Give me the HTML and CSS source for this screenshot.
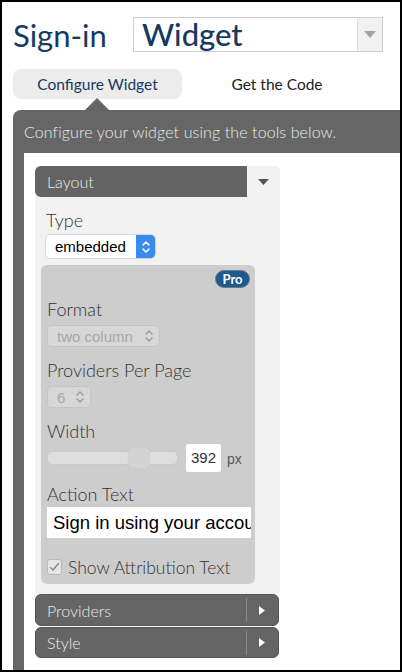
FILE: index.html
```html
<!DOCTYPE html>
<html>
<head>
<meta charset="utf-8">
<link rel="stylesheet" href="styles.css">
</head>
<body>
<div class="frame">
  <div class="top">
    <h1 class="title">Sign-in</h1>
    <div class="big-select">
      <span class="big-select-text">Widget</span>
      <span class="big-select-arrow"><svg width="12" height="7" viewBox="0 0 12 7"><path d="M0 0H12L6 7Z" fill="#a3a3a3"/></svg></span>
    </div>
  </div>
  <div class="tabs">
    <div class="tab active">Configure Widget</div>
    <div class="tab">Get the Code</div>
  </div>
  <div class="panel">
    <div class="panel-head">Configure your widget using the tools below.</div>
    <div class="panel-body">
      <div class="section">
        <div class="section-head">
          <div class="section-title">Layout</div>
          <div class="section-toggle"><svg width="11" height="6" viewBox="0 0 11 6"><path d="M0 0H11L5.5 6Z" fill="#555"/></svg></div>
        </div>
        <div class="section-content">
          <div class="label first">Type</div>
          <div class="select">
            <span class="select-text">embedded</span>
            <span class="stepper"><svg width="10" height="16" viewBox="0 0 10 16"><path d="M2 6L5 3L8 6M2 10L5 13L8 10" fill="none" stroke="#fff" stroke-width="1.6" stroke-linecap="round" stroke-linejoin="round"/></svg></span>
          </div>
          <div class="pro-box">
            <div class="pro-row"><span class="pro">Pro</span></div>
            <div class="label">Format</div>
            <div class="dselect wide">
              <span>two column</span>
              <svg width="10" height="16" viewBox="0 0 10 16"><path d="M2 6L5 3L8 6M2 10L5 13L8 10" fill="none" stroke="#9a9a9a" stroke-width="1.4" stroke-linecap="round" stroke-linejoin="round"/></svg>
            </div>
            <div class="label gap">Providers Per Page</div>
            <div class="dselect narrow">
              <span>6</span>
              <svg width="10" height="16" viewBox="0 0 10 16"><path d="M2 6L5 3L8 6M2 10L5 13L8 10" fill="none" stroke="#9a9a9a" stroke-width="1.4" stroke-linecap="round" stroke-linejoin="round"/></svg>
            </div>
            <div class="label gap">Width</div>
            <div class="slider-row">
              <div class="track"><div class="thumb"></div></div>
              <div class="num">392</div>
              <span class="unit">px</span>
            </div>
            <div class="label gap2">Action Text</div>
            <input class="text-input" type="text" value="Sign in using your account">
            <div class="check-row">
              <span class="checkbox"><svg width="11" height="10" viewBox="0 0 11 10"><path d="M1.5 5.5L4 8L9.5 1.5" fill="none" stroke="#888" stroke-width="1.4" stroke-linecap="round" stroke-linejoin="round"/></svg></span>
              <span class="check-label">Show Attribution Text</span>
            </div>
          </div>
        </div>
      </div>
      <div class="bar first-bar">
        <span class="bar-title">Providers</span>
        <span class="bar-sep"></span>
        <span class="bar-arrow"><svg width="6" height="9" viewBox="0 0 6 9"><path d="M0 0L6 4.5L0 9Z" fill="#fff"/></svg></span>
      </div>
      <div class="bar">
        <span class="bar-title">Style</span>
        <span class="bar-sep"></span>
        <span class="bar-arrow"><svg width="6" height="9" viewBox="0 0 6 9"><path d="M0 0L6 4.5L0 9Z" fill="#fff"/></svg></span>
      </div>
    </div>
  </div>
</div>
</body>
</html>
```
FILE: styles.css
```css
* { box-sizing: border-box; }
html, body { margin: 0; padding: 0; background: #fff; }
.frame {
  width: 402px;
  height: 672px;
  border: 2px solid #000;
  overflow: hidden;
  display: flex;
  flex-direction: column;
  font-family: Lato, "Open Sans", sans-serif;
  background: #fff;
}
.top {
  display: flex;
  align-items: center;
  padding: 15px 0 0 11px;
  height: 50px;
}
.title {
  margin: 0;
  font-weight: 400;
  font-size: 31px;
  color: #163a5f;
  width: 120px;
  line-height: 35px;
  position: relative;
  top: 1px;
}
.big-select {
  display: flex;
  width: 250px;
  height: 35px;
  border: 1px solid #cfcfcf;
  background: #fff;
}
.big-select-text {
  flex: 1;
  font-size: 31px;
  line-height: 33px;
  color: #163a5f;
  padding-left: 8px;
  font-weight: 500;
}
.big-select-arrow {
  width: 25px;
  background: #f1f1f1;
  border-left: 1px solid #dedede;
  display: flex;
  align-items: center;
  justify-content: center;
}
.tabs {
  display: flex;
  margin: 17px 0 11px 11px;
  height: 30px;
}
.tab {
  font-size: 15.5px;
  line-height: 30px;
  color: #222;
  text-align: center;
  font-weight: 400;
}
.tab.active {
  width: 169px;
  background: #ececec;
  border-radius: 8px;
  color: #163a5f;
  position: relative;
}
.tab.active::after {
  content: "";
  position: absolute;
  left: 72px;
  bottom: -11px;
  border-left: 12px solid transparent;
  border-right: 12px solid transparent;
  border-bottom: 12px solid #666;
}
.tab + .tab { width: 190px; }
.panel {
  flex: 1;
  margin-left: 11px;
  background: #666;
  border-top-left-radius: 8px;
  padding-left: 11px;
  display: flex;
  flex-direction: column;
}
.panel-head {
  height: 43px;
  line-height: 43px;
  color: #ececec;
  font-size: 16px;
  font-weight: 300;
  white-space: nowrap;
  letter-spacing: 0.1px;
}
.panel-body {
  flex: 1;
  background: #fff;
  padding: 13px 0 0 11px;
}
.section {
  width: 244px;
  background: #f2f2f2;
  border-radius: 4px;
  box-shadow: 1px 1px 1px rgba(0,0,0,0.06);
}
.section-head {
  display: flex;
  height: 31px;
}
.section-title {
  width: 212px;
  background: #636363;
  border-radius: 6px 0 0 6px;
  color: #ececec;
  font-size: 16px;
  font-weight: 300;
  line-height: 31px;
  padding-left: 12px;
}
.section-toggle {
  flex: 1;
  display: flex;
  align-items: center;
  justify-content: center;
  padding-top: 1px;
}
.section-content {
  padding: 0 24px 9px 6px;
}
.label {
  font-size: 18px;
  line-height: 20px;
  color: #333;
  font-weight: 300;
}
.label.first { margin: 13px 0 5px 5px; }
.select {
  display: flex;
  width: 109px;
  height: 23px;
  margin-left: 5px;
  background: #fff;
  border-radius: 4px;
  box-shadow: 0 0 0 1px #d6d6d6;
  overflow: hidden;
}
.select-text {
  flex: 1;
  font-family: "Liberation Sans", Arial, sans-serif;
  font-size: 15px;
  line-height: 23px;
  color: #000;
  padding-left: 9px;
}
.stepper {
  width: 19px;
  background: #3a8bef;
  border-radius: 0 4px 4px 0;
  display: flex;
  align-items: center;
  justify-content: center;
}
.pro-box {
  margin-top: 7px;
  background: #cdcdcd;
  border-radius: 6px;
  padding: 5px 5px 7px 6px;
}
.pro-row {
  display: flex;
  justify-content: flex-end;
  height: 18px;
  margin-bottom: 11px;
}
.pro {
  background: #1e5a8a;
  color: #fff;
  font-weight: 700;
  font-size: 13px;
  line-height: 16px;
  width: 35px;
  text-align: center;
  border-radius: 9px;
  border: 1px solid #5d7d99;
}
.pro-box .label { margin-bottom: 6px; }
.pro-box .label.gap { margin-top: 13px; }
.pro-box .label.gap2 { margin-top: 12px; margin-bottom: 3px; }
.dselect {
  display: flex;
  align-items: center;
  justify-content: space-between;
  height: 22px;
  background: #d7d7d7;
  border: 1px solid #c4c4c4;
  border-radius: 4px;
  font-family: "Liberation Sans", Arial, sans-serif;
  font-size: 15px;
  color: #a8a8a8;
  padding: 0 5px 0 9px;
}
.dselect.wide { width: 113px; }
.dselect.narrow { width: 44px; }
.slider-row {
  display: flex;
  align-items: center;
  height: 28px;
  margin-top: -3px;
}
.track {
  width: 131px;
  height: 14px;
  background: #dedede;
  border: 1px solid #c9c9c9;
  border-radius: 5px;
  position: relative;
}
.thumb {
  position: absolute;
  left: 80px;
  top: -4px;
  width: 22px;
  height: 20px;
  background: #d3d3d3;
  border-radius: 4px;
  box-shadow: 0 0 1px rgba(0,0,0,0.15);
}
.num {
  margin-left: 8px;
  width: 35px;
  height: 28px;
  background: #fff;
  border-radius: 2px;
  font-family: "Liberation Sans", Arial, sans-serif;
  font-size: 15px;
  line-height: 28px;
  color: #333;
  text-align: center;
}
.unit {
  margin-left: 6px;
  font-family: "Liberation Sans", Arial, sans-serif;
  font-size: 14px;
  color: #555;
  padding-top: 2px;
}
.text-input {
  display: block;
  width: 204px;
  height: 31px;
  margin: 0;
  border: none;
  outline: none;
  background: #fff;
  font-family: "Liberation Sans", Arial, sans-serif;
  font-size: 18.5px;
  color: #000;
  padding: 0 0 0 6px;
}
.check-row {
  display: flex;
  align-items: center;
  height: 20px;
  margin-top: 19px;
}
.checkbox {
  width: 15px;
  height: 16px;
  background: #e6e6e6;
  border: 1px solid #b9b9b9;
  border-radius: 3px;
  display: flex;
  align-items: center;
  justify-content: center;
}
.check-label {
  margin-left: 6px;
  font-size: 17.5px;
  font-weight: 300;
  color: #333;
}
.bar {
  display: flex;
  align-items: center;
  width: 244px;
  height: 31px;
  margin-top: 1px;
  background: #656565;
  border-radius: 6px;
  border: 1px solid #555;
}
.bar.first-bar { height: 32px; }
.bar-title {
  width: 210px;
  padding-left: 11px;
  color: #ececec;
  font-size: 16px;
  font-weight: 300;
}
.bar-sep {
  width: 1px;
  height: 24px;
  background: #8a8a8a;
}
.bar-arrow {
  flex: 1;
  display: flex;
  justify-content: center;
  padding-right: 2px;
}
```
